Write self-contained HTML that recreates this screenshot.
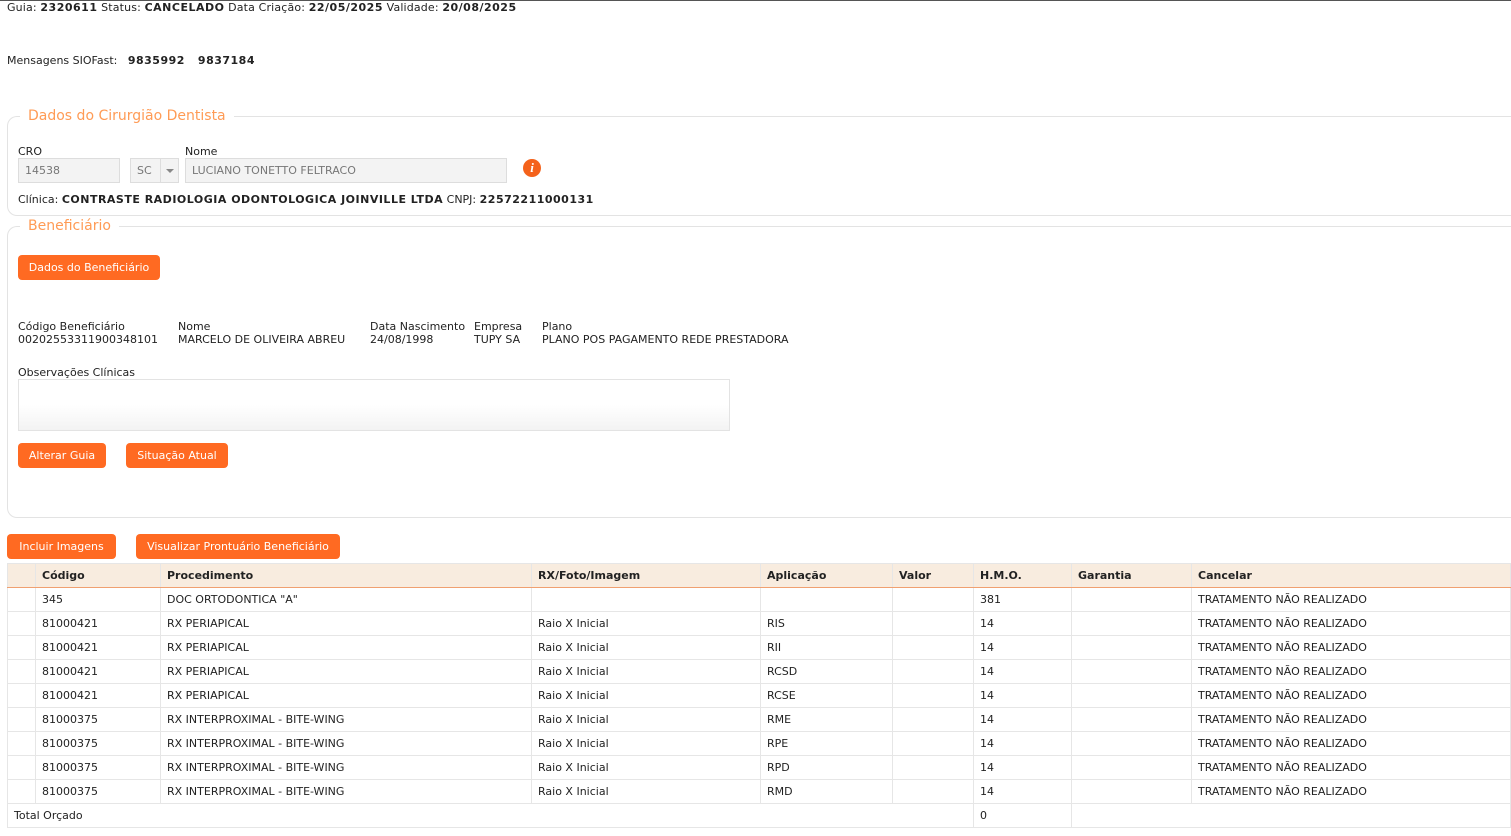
<!DOCTYPE html>
<html><head><meta charset="utf-8"><style>
*{box-sizing:border-box;margin:0;padding:0}
body{width:1511px;height:836px;overflow:hidden;background:#fff;font-family:"DejaVu Sans","Liberation Sans",sans-serif;font-size:11px;color:#222;position:relative;border-top:1px solid #555}
.a{position:absolute;white-space:nowrap}
b{font-weight:bold;letter-spacing:0.5px}
.box{position:absolute;border:1px solid #e3e3e3;border-right:none;border-radius:10px 0 0 10px}
.leg{position:absolute;background:#fff;color:#ff9b55;font-size:14px;padding:0 8px;line-height:16px}
.btn{position:absolute;background:#ff6a22;color:#fff;border-radius:4px;height:25px;line-height:25px;text-align:center;font-size:11px}
.inp{position:absolute;background:#f3f3f3;border:1px solid #ddd;height:25px;line-height:23px;padding-left:6px;color:#777}
table{position:absolute;left:7px;top:562px;width:1504px;border-collapse:collapse;font-size:11px}
td,th{height:24px;padding:0 6px;text-align:left;border:1px solid #e6e6e6;white-space:nowrap}
th{background:#f8ecdf;font-weight:bold;border-bottom:1px solid #f0a070}
</style></head><body>
<div class="a" style="left:7px;top:0px;letter-spacing:0.15px">Guia: <b>2320611</b> Status: <b>CANCELADO</b> Data Criação: <b>22/05/2025</b> Validade: <b>20/08/2025</b></div>
<div class="a" style="left:7px;top:53px">Mensagens SIOFast: &nbsp; <b>9835992 &nbsp; 9837184</b></div>

<div class="box" style="left:7px;top:115px;width:1504px;height:100px"></div>
<div class="leg" style="left:20px;top:107px">Dados do Cirurgião Dentista</div>
<div class="a" style="left:18px;top:144px">CRO</div>
<div class="a" style="left:185px;top:144px">Nome</div>
<div class="inp" style="left:18px;top:157px;width:102px">14538</div>
<div class="inp" style="left:130px;top:157px;width:49px">SC</div>
<div class="a" style="left:160px;top:157px;width:19px;height:25px;background:#f3f3f3;border:1px solid #ddd"><div style="position:absolute;left:5px;top:10px;border-left:4px solid transparent;border-right:4px solid transparent;border-top:4px solid #888"></div></div>
<div class="inp" style="left:185px;top:157px;width:322px">LUCIANO TONETTO FELTRACO</div>
<div class="a" style="left:523px;top:158px;width:18px;height:18px;border-radius:50%;background:#f4621b;color:#fff;font-weight:bold;font-style:italic;text-align:center;line-height:18px;font-family:'Liberation Serif',serif;font-size:13px">i</div>
<div class="a" style="left:18px;top:192px">Clínica: <b>CONTRASTE RADIOLOGIA ODONTOLOGICA JOINVILLE LTDA</b> CNPJ: <b>22572211000131</b></div>

<div class="box" style="left:7px;top:225px;width:1504px;height:292px"></div>
<div class="leg" style="left:20px;top:217px">Beneficiário</div>
<div class="btn" style="left:18px;top:254px;width:142px">Dados do Beneficiário</div>
<div class="a" style="left:18px;top:319px;line-height:13px">Código Beneficiário<br>00202553311900348101</div>
<div class="a" style="left:178px;top:319px;line-height:13px">Nome<br>MARCELO DE OLIVEIRA ABREU</div>
<div class="a" style="left:370px;top:319px;line-height:13px">Data Nascimento<br>24/08/1998</div>
<div class="a" style="left:474px;top:319px;line-height:13px">Empresa<br>TUPY SA</div>
<div class="a" style="left:542px;top:319px;line-height:13px">Plano<br>PLANO POS PAGAMENTO REDE PRESTADORA</div>
<div class="a" style="left:18px;top:365px">Observações Clínicas</div>
<div class="a" style="left:18px;top:378px;width:712px;height:52px;border:1px solid #e3e3e3;background:linear-gradient(#fff 50%,#f3f3f3)"></div>
<div class="btn" style="left:18px;top:442px;width:88px">Alterar Guia</div>
<div class="btn" style="left:126px;top:442px;width:102px">Situação Atual</div>

<div class="btn" style="left:7px;top:533px;width:109px">Incluir Imagens</div>
<div class="btn" style="left:136px;top:533px;width:204px">Visualizar Prontuário Beneficiário</div>

<table>
<colgroup><col style="width:28px"><col style="width:125px"><col style="width:371px"><col style="width:229px"><col style="width:132px"><col style="width:81px"><col style="width:98px"><col style="width:120px"><col></colgroup>
<tr><th></th><th>Código</th><th>Procedimento</th><th>RX/Foto/Imagem</th><th>Aplicação</th><th>Valor</th><th>H.M.O.</th><th>Garantia</th><th>Cancelar</th></tr>
<tr><td></td><td>345</td><td>DOC ORTODONTICA "A"</td><td></td><td></td><td></td><td>381</td><td></td><td>TRATAMENTO NÃO REALIZADO</td></tr>
<tr><td></td><td>81000421</td><td>RX PERIAPICAL</td><td>Raio X Inicial</td><td>RIS</td><td></td><td>14</td><td></td><td>TRATAMENTO NÃO REALIZADO</td></tr>
<tr><td></td><td>81000421</td><td>RX PERIAPICAL</td><td>Raio X Inicial</td><td>RII</td><td></td><td>14</td><td></td><td>TRATAMENTO NÃO REALIZADO</td></tr>
<tr><td></td><td>81000421</td><td>RX PERIAPICAL</td><td>Raio X Inicial</td><td>RCSD</td><td></td><td>14</td><td></td><td>TRATAMENTO NÃO REALIZADO</td></tr>
<tr><td></td><td>81000421</td><td>RX PERIAPICAL</td><td>Raio X Inicial</td><td>RCSE</td><td></td><td>14</td><td></td><td>TRATAMENTO NÃO REALIZADO</td></tr>
<tr><td></td><td>81000375</td><td>RX INTERPROXIMAL - BITE-WING</td><td>Raio X Inicial</td><td>RME</td><td></td><td>14</td><td></td><td>TRATAMENTO NÃO REALIZADO</td></tr>
<tr><td></td><td>81000375</td><td>RX INTERPROXIMAL - BITE-WING</td><td>Raio X Inicial</td><td>RPE</td><td></td><td>14</td><td></td><td>TRATAMENTO NÃO REALIZADO</td></tr>
<tr><td></td><td>81000375</td><td>RX INTERPROXIMAL - BITE-WING</td><td>Raio X Inicial</td><td>RPD</td><td></td><td>14</td><td></td><td>TRATAMENTO NÃO REALIZADO</td></tr>
<tr><td></td><td>81000375</td><td>RX INTERPROXIMAL - BITE-WING</td><td>Raio X Inicial</td><td>RMD</td><td></td><td>14</td><td></td><td>TRATAMENTO NÃO REALIZADO</td></tr>
<tr><td colspan="6">Total Orçado</td><td>0</td><td colspan="2"></td></tr>
</table>
</body></html>
